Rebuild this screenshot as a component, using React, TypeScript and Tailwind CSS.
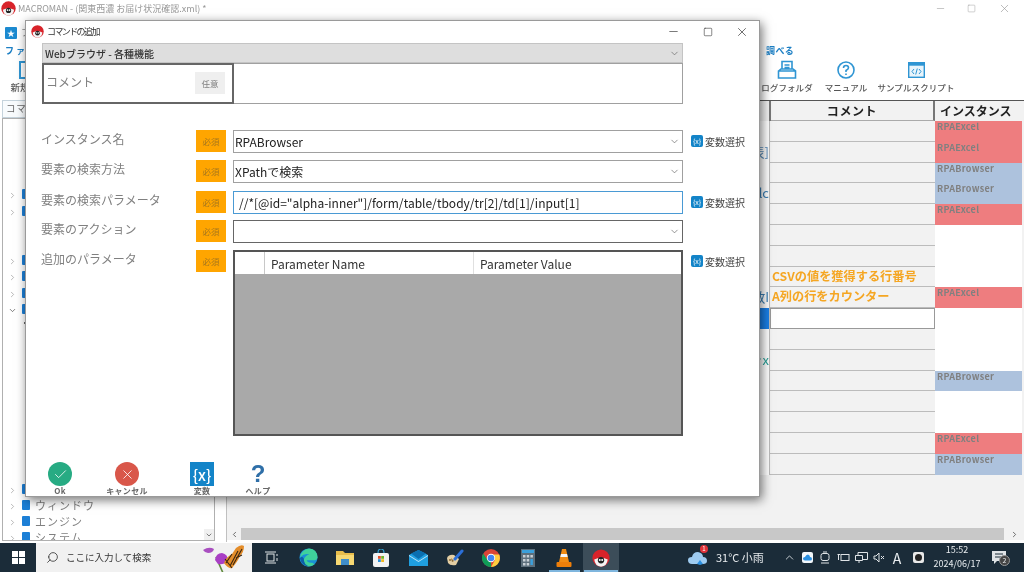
import { Check, ChevronDown, ChevronRight, ChevronLeft, ChevronUp, Minus, Search, Square, X } from "lucide-react";

const font = "font-['Noto_Sans_CJK_JP','Noto_Sans',sans-serif]";

// filas de la grilla de fondo
const rows = [
  { inst: "RPAExcel" },
  { inst: "RPAExcel", peek: "表]", peekColor: "text-[#5b8fbd]" },
  { inst: "RPABrowser" },
  { inst: "RPABrowser", peek: "lc", peekColor: "text-[#3a7fb5]" },
  { inst: "RPAExcel" },
  {},
  {},
  { comment: "CSVの値を獲得する行番号" },
  { inst: "RPAExcel", comment: "A列の行をカウンター", peek: "数I", peekColor: "text-[#3a7fb5]" },
  { selected: true },
  {},
  { peek: "きx", peekColor: "text-[#2aa198]" },
  { inst: "RPABrowser" },
  {},
  {},
  { inst: "RPAExcel" },
  { inst: "RPABrowser" },
] as { inst?: string; comment?: string; peek?: string; peekColor?: string; selected?: boolean }[];

const treeRows: { y: string; open?: boolean; label?: string; leaf?: boolean }[] = [
  { y: "h-[17px]" },
  { y: "h-[49px]" },
  { y: "h-[16px]" },
  { y: "h-[17px]" },
  { y: "h-[16px]" },
  { y: "h-[16px]", open: true },
  { y: "h-[164px]", leaf: true },
  { y: "h-[16px]" },
  { y: "h-[16px]", label: "ウィンドウ" },
  { y: "h-[16px]", label: "エンジン" },
  { y: "h-[16px]", label: "システム" },
];

function AppIcon({ size = 14 }: { size?: number }) {
  return (
    <svg width={size} height={size} viewBox="0 0 24 24">
      <circle cx="12" cy="12" r="11.5" fill="#d8232a" />
      <path d="M3 14 Q12 9 21 14 Q20 23 12 23.5 Q4 23 3 14Z" fill="#f4f4f4" />
      <circle cx="12" cy="15" r="4.2" fill="#222" />
      <circle cx="10.4" cy="14.6" r="1.3" fill="#fff" />
      <circle cx="13.6" cy="14.6" r="1.3" fill="#fff" />
    </svg>
  );
}

function VarIcon({ className = "" }: { className?: string }) {
  return (
    <span className={`flex items-center justify-center bg-[#1384c8] text-white ${className}`}>{"{x}"}</span>
  );
}

function VarSelect() {
  return (
    <div className="flex items-center h-[22px] ml-[8px]">
      <VarIcon className="w-[12px] h-[12px] rounded-[2px] text-[7px] leading-none" />
      <span className="ml-[2px] text-[10px] text-[#444] whitespace-nowrap">変数選択</span>
    </div>
  );
}

function Badge({ text = "必須", on = true }: { text?: string; on?: boolean }) {
  return (
    <div className={`w-[30px] h-[22px] shrink-0 flex items-center justify-center text-[8.5px] ${on ? "bg-[#ffa500] text-[#a8781c]" : "bg-[#efefef] text-[#808080]"}`}>
      {text}
    </div>
  );
}

function FormRow({ label, children, extra }: { label: string; children: React.ReactNode; extra?: boolean }) {
  return (
    <div className="flex items-start h-[23px]">
      <div className="w-[155px] h-[18px] shrink-0 leading-[18px] text-[12px] text-[#808080] whitespace-nowrap">{label}</div>
      <Badge />
      <div className="ml-[7px] w-[450px] shrink-0">{children}</div>
      {extra && <VarSelect />}
    </div>
  );
}

function SelectField({ value, dark }: { value?: string; dark?: boolean }) {
  return (
    <div className={`h-[23px] flex items-center justify-between border pl-[1px] pr-[2px] bg-white ${dark ? "border-[#666] border-[1.5px]" : "border-[#a0a0a0]"}`}>
      <span className="text-[12px] text-[#222] leading-none">{value}</span>
      <ChevronDown size={11} strokeWidth={1.5} className="text-[#666]" />
    </div>
  );
}

function FooterBtn({ icon, label, className }: { icon: React.ReactNode; label: string; className: string }) {
  return (
    <div className={`w-[50px] flex flex-col items-center ${className}`}>
      <div className="h-[24px] flex items-center justify-center">{icon}</div>
      <span className="text-[8px] font-bold text-[#666] leading-[10px] whitespace-nowrap tracking-[0.3px]">{label}</span>
    </div>
  );
}

function Dialog() {
  return (
    <div className="absolute left-[25px] top-[20px] w-[735px] h-[477px] bg-white border border-[#9a9a9a] shadow-[2px_3px_10px_rgba(0,0,0,0.55)] flex flex-col">
      {/* barra de titulo */}
      <div className="h-[21px] shrink-0 flex items-center pl-[5px]">
        <AppIcon size={13} />
        <span className="ml-[3px] text-[9px] tracking-[-1.6px] text-[#333] flex-1">コマンドの追加</span>
        <Minus size={13} strokeWidth={1.2} className="text-[#333]" />
        <Square size={10} strokeWidth={1.4} className="ml-[23px] text-[#333]" />
        <X size={14} strokeWidth={1.2} className="ml-[22px] mr-[10px] text-[#333]" />
      </div>
      <div className="ml-[16px] w-[641px] mt-[1px] h-[20px] shrink-0 flex items-center justify-between bg-[#dedede] border border-[#c4c4c4] pl-[2px] pr-[2px]">
        <span className="text-[10px] font-medium text-[#333]">Webブラウザ - 各種機能</span>
        <ChevronDown size={11} strokeWidth={1.5} className="text-[#666]" />
      </div>
      <div className="ml-[16px] w-[641px] h-[41px] shrink-0 flex">
        <div className="w-[192px] border-2 border-[#666] pl-[2px] flex items-start justify-between pr-[7px]">
          <span className="mt-[7px] text-[12px] text-[#808080] leading-[20px]">コメント</span>
          <div className="mt-[7px]"><Badge text="任意" on={false} /></div>
        </div>
        <div className="flex-1 border border-[#a0a0a0] border-l-0" />
      </div>
      {/* formulario */}
      <div className="mt-[26px] ml-[15px] flex flex-col gap-[7px]">
        <FormRow label="インスタンス名" extra><SelectField value="RPABrowser" /></FormRow>
        <FormRow label="要素の検索方法"><SelectField value="XPathで検索" /></FormRow>
        <div className="mt-[1px] mb-[-1px]">
          <FormRow label="要素の検索パラメータ" extra>
            <div className="h-[23px] flex items-center border border-[#4a9ad4] pl-[5px] text-[12px] text-[#222] whitespace-nowrap bg-white">
              //*[@id="alpha-inner"]/form/table/tbody/tr[2]/td[1]/input[1]
            </div>
          </FormRow>
        </div>
        <FormRow label="要素のアクション"><SelectField dark /></FormRow>
        <FormRow label="追加のパラメータ" extra>
          <div className="h-[186px] border-2 border-[#555] bg-[#a9a9a9] flex flex-col">
            <div className="h-[22px] bg-white flex text-[12px] text-[#333] leading-[24px]">
              <div className="w-[30px] border-r border-[#c8c8c8]" />
              <div className="w-[209px] pl-[6px] border-r border-[#e0e0e0]">Parameter Name</div>
              <div className="pl-[6px]">Parameter Value</div>
            </div>
          </div>
        </FormRow>
      </div>
      {/* botones */}
      <div className="mt-auto flex ml-[9px]">
        <FooterBtn
          className=""
          label="Ok"
          icon={<span className="w-[24px] h-[24px] rounded-full bg-[#27ab83] flex items-center justify-center"><Check size={15} strokeWidth={1.3} className="text-white" /></span>}
        />
        <FooterBtn
          className="ml-[17px]"
          label="キャンセル"
          icon={<span className="w-[24px] h-[24px] rounded-full bg-[#d9574a] flex items-center justify-center"><X size={15} strokeWidth={1.3} className="text-white" /></span>}
        />
        <FooterBtn
          className="ml-[25px]"
          label="変数"
          icon={<VarIcon className="w-[24px] h-[24px] text-[15px] leading-none font-medium" />}
        />
        <FooterBtn
          className="ml-[6px]"
          label="ヘルプ"
          icon={<span className="text-[#2f6fa8] text-[24px] font-bold leading-none font-['Liberation_Sans',sans-serif]">?</span>}
        />
      </div>
    </div>
  );
}

function Grid() {
  return (
    <div className="flex-1 min-h-0 flex flex-col bg-[#f2f2f2] border-t border-[#555]">
      <div className="h-[20px] shrink-0 flex bg-[#f2f2f2]">
        <div className="flex-1 border-r-2 border-[#777]" />
        <div className="w-[164px] border-r-2 border-[#777] border-b border-b-[#aaa] text-center text-[12px] font-bold text-[#222] tracking-[0.6px] leading-[19px]">コメント</div>
        <div className="w-[87px] pl-[5px] text-[12px] font-bold text-[#222] leading-[19px] whitespace-nowrap">インスタンス</div>
        <div className="w-[2px]" />
      </div>
      {rows.map((r, i) => (
        <div key={i} className="h-[20.8px] shrink-0 flex">
          <div className={`flex-1 border-r border-[#bbb] flex justify-end overflow-hidden ${r.selected ? "bg-[#1a7fe6]" : "bg-white"}`}>
            {r.peek && <span className={`text-[13px] leading-[20px] whitespace-nowrap ${r.peekColor}`}>{r.peek}</span>}
          </div>
          <div className={`w-[165px] overflow-hidden pl-[2px] text-[12.2px] font-bold text-[#f5a623] leading-[18px] whitespace-nowrap ${r.selected ? "bg-white border border-[#999]" : "bg-[#f2f2f2] border-b border-[#bcbcbc]"}`}>
            {r.comment}
          </div>
          <div className={`w-[87px] pl-[2px] text-[9px] font-bold text-[#808080] leading-[12px] tracking-[0.3px] ${r.inst === "RPAExcel" ? "bg-[#ee7d7f]" : r.inst === "RPABrowser" ? "bg-[#adc2dd]" : "bg-white"}`}>
            {r.inst}
          </div>
          <div className="w-[2px]" />
        </div>
      ))}
    </div>
  );
}

function TaskCell({ children, active, wide }: { children?: React.ReactNode; active?: boolean; wide?: boolean }) {
  return (
    <div className={`relative h-full flex items-center justify-center shrink-0 ${wide ? "w-[38px]" : "w-[36.6px]"} ${active ? "bg-[#3c4d59]" : ""}`}>
      {children}
    </div>
  );
}

function Butterfly() {
  return (
    <svg width="50" height="30" viewBox="0 0 50 30">
      <path d="M14 14 L21 30" stroke="#5f8a3c" strokeWidth="1.6" fill="none" />
      <path d="M1 7 Q7 3 12 6 Q11 10 6 10 Q3 10 1 7Z" fill="#a94fc0" />
      <path d="M13 17 Q14 10 20 10 Q26 11 26 18 Q22 22 16 21Z" fill="#a93fc4" />
      <path d="M22 20 Q24 14 30 11 L34 5 Q39 1 42 3 Q42 9 38 13 Q36 18 30 25 Q26 26 22 20Z" fill="#e48d2a" />
      <path d="M24 20 L30 11 M28 23 L36 8 M31 22 L40 6 M23 16 L30 25 M34 15 L40 12" stroke="#3a2510" strokeWidth="1.1" fill="none" />
    </svg>
  );
}

function Taskbar() {
  return (
    <div className="h-[30px] shrink-0 flex items-stretch bg-[#1b2c39] border-t border-white text-white">
      <div className="w-[36px] flex items-center justify-center">
        <svg width="13" height="13" viewBox="0 0 13 13" fill="#fff">
          <rect width="6" height="6" /><rect x="7" width="6" height="6" /><rect y="7" width="6" height="6" /><rect x="7" y="7" width="6" height="6" />
        </svg>
      </div>
      <div className="w-[216px] bg-[#f1f1f1] flex items-center pl-[10px] text-[#333] relative overflow-hidden">
        <Search size={13} strokeWidth={1.5} className="-scale-x-100" />
        <span className="ml-[7px] text-[9.5px]">ここに入力して検索</span>
        <div className="absolute right-0 top-0"><Butterfly /></div>
      </div>
      <TaskCell wide>
        <svg width="13" height="13" viewBox="0 0 13 13" fill="none" stroke="#dfe3e6" strokeWidth="1">
          <rect x="2" y="3" width="7" height="7" /><path d="M0 1H11M0 12H11M12 3V5M12 7V10" />
        </svg>
      </TaskCell>
      <TaskCell>
        <svg width="19" height="19" viewBox="0 0 20 20">
          <circle cx="10" cy="10" r="9.5" fill="#1a8fd6" />
          <path d="M1 10 Q3 1 11 .6 Q19 1 19.5 10 Q19 13 15 13 H8 Q9 16 14 15.5 L16.5 17 Q13 19.5 10 19.5 Q4 19 5 12 Q7 7 11 7 Q6 5 1 10Z" fill="#3fd19c" />
          <path d="M5 11 Q5 18 11 19.5 Q3 19 1 11 Q3 8 5 11Z" fill="#0d5ea8" />
        </svg>
      </TaskCell>
      <TaskCell>
        <svg width="18" height="16" viewBox="0 0 18 16">
          <path d="M0 1H7L9 3H18V15H0Z" fill="#e8bd4c" /><rect x="0" y="5" width="18" height="10" fill="#f6d873" /><rect x="5" y="9" width="8" height="6" fill="#3f8dc9" />
        </svg>
      </TaskCell>
      <TaskCell>
        <svg width="18" height="18" viewBox="0 0 18 18">
          <path d="M6 4 Q6 0 9 0 Q12 0 12 4" fill="none" stroke="#35a4d6" strokeWidth="1.2" />
          <rect x="1" y="4" width="16" height="14" rx="2" fill="#f2f2f2" />
          <rect x="6" y="7" width="2.8" height="2.8" fill="#e8502a" /><rect x="9.2" y="7" width="2.8" height="2.8" fill="#70b52c" />
          <rect x="6" y="10.2" width="2.8" height="2.8" fill="#2a8fd8" /><rect x="9.2" y="10.2" width="2.8" height="2.8" fill="#f4b81c" />
        </svg>
      </TaskCell>
      <TaskCell>
        <svg width="19" height="16" viewBox="0 0 19 16">
          <path d="M0 5L9.5 0L19 5V16H0Z" fill="#1f9fe0" /><path d="M0 5L9.5 11L19 5V6L9.5 12L0 6Z" fill="#bfe6fa" /><path d="M2 3.5L9.5 0L17 3.5L9.5 9Z" fill="#0b6fb0" />
        </svg>
      </TaskCell>
      <TaskCell>
        <svg width="18" height="18" viewBox="0 0 18 18">
          <path d="M1 9 Q3 5 8 6 L13 10 L10 16 Q4 17 2 14Z" fill="#e4cfa4" />
          <path d="M5 9 L8 12 L6 13Z" fill="#8a6a38" /><circle cx="4" cy="11" r="1" fill="#8a6a38" />
          <path d="M9 10 L16 2" stroke="#2b6fd8" strokeWidth="3" strokeLinecap="round" />
        </svg>
      </TaskCell>
      <TaskCell>
        <svg width="18" height="18" viewBox="0 0 18 18">
          <circle cx="9" cy="9" r="9" fill="#db4437" />
          <path d="M9 18A9 9 0 0 1 1.2 4.5L5.5 11 Q7 13 9 13Z" fill="#0f9d58" />
          <path d="M9 18A9 9 0 0 0 17.2 5.5H9L13 11Z" fill="#ffcd40" />
          <circle cx="9" cy="9" r="4.2" fill="#fff" /><circle cx="9" cy="9" r="3.3" fill="#4285f4" />
        </svg>
      </TaskCell>
      <TaskCell>
        <svg width="14" height="18" viewBox="0 0 14 18">
          <rect width="14" height="18" fill="#5d6f7c" /><rect x="1" y="1" width="12" height="3" fill="#3ba0dc" />
          <rect x="2" y="6" width="2.5" height="2.5" fill="#c8d0d6" /><rect x="5.7" y="6" width="2.5" height="2.5" fill="#c8d0d6" /><rect x="9.4" y="6" width="2.5" height="2.5" fill="#c8d0d6" />
          <rect x="2" y="10" width="2.5" height="2.5" fill="#c8d0d6" /><rect x="5.7" y="10" width="2.5" height="2.5" fill="#c8d0d6" /><rect x="9.4" y="10" width="2.5" height="6" fill="#3ba0dc" />
          <rect x="2" y="14" width="2.5" height="2.5" fill="#c8d0d6" /><rect x="5.7" y="14" width="2.5" height="2.5" fill="#c8d0d6" />
        </svg>
      </TaskCell>
      <TaskCell>
        <svg width="16" height="18" viewBox="0 0 16 18">
          <path d="M6 0H10L13 13H3Z" fill="#f28c13" /><path d="M5 5H11L11.7 8H4.3Z" fill="#f5f5f5" />
          <rect x="0.5" y="13" width="15" height="5" rx="1" fill="#ee7f0a" />
        </svg>
        <span className="absolute bottom-0 left-[3px] right-[3px] h-[2px] bg-[#7fb6de]" />
      </TaskCell>
      <TaskCell active>
        <AppIcon size={18} />
        <span className="absolute bottom-0 left-[1px] right-[1px] h-[2px] bg-[#7fb6de]" />
      </TaskCell>
      <div className="flex-1" />
      {/* bandeja */}
      <div className="w-[339px] shrink-0 flex items-center text-[#e8ecef]">
        <div className="w-[26px] flex justify-center relative">
          <svg width="20" height="15" viewBox="0 0 20 15"><path d="M4 14 Q0 14 0 10 Q0 7 4 7 Q5 2 10 2 Q15 3 15 7 Q19 7 19 11 Q19 14 15 14Z" fill="#9ecbf0" /><path d="M9 14 L12 10 L15 14 L12 15Z" fill="#2a8fe0" /></svg>
          <span className="absolute top-[-5px] right-[3px] w-[8px] h-[8px] rounded-full bg-[#e2333a] text-[6px] leading-[8px] text-center text-white">1</span>
        </div>
        <span className="w-[60px] pl-[5px] text-[11px] whitespace-nowrap">31°C 小雨</span>
        <div className="ml-[9px] w-[18px] flex justify-center"><ChevronUp size={13} strokeWidth={1.5} /></div>
        <div className="w-[18px] flex justify-center">
          <span className="w-[11px] h-[11px] rounded-[2px] bg-[#f2f7fb] flex items-center justify-center">
            <svg width="9" height="7" viewBox="0 0 9 7"><path d="M2 6.5 Q0 6.5 0 4.5 Q0 3 2 3 Q3 .5 5 .5 Q7 1 7 3 Q9 3 9 5 Q9 6.5 7 6.5Z" fill="#2a8fe0" /></svg>
          </span>
        </div>
        <div className="w-[18px] flex justify-center">
          <svg width="10" height="13" viewBox="0 0 10 13" fill="none" stroke="#dfe3e6"><rect x="1" y="2.5" width="8" height="7" rx="2" /><path d="M1 12H9M3 1H7" /></svg>
        </div>
        <div className="w-[18px] flex justify-center">
          <svg width="13" height="9" viewBox="0 0 13 9" fill="none" stroke="#dfe3e6"><rect x="4" y="1.5" width="8" height="6" /><path d="M.5 1.5H3M1.5 1.5V7" /></svg>
        </div>
        <div className="w-[18px] flex justify-center">
          <svg width="13" height="12" viewBox="0 0 13 12" fill="none" stroke="#dfe3e6"><path d="M3 3V.5H12.5V7.5H8M.5 3.5H7.5V8.5H.5ZM4 8.5V11" /></svg>
        </div>
        <div className="w-[18px] flex justify-center">
          <svg width="12" height="11" viewBox="0 0 12 11" fill="none" stroke="#dfe3e6"><path d="M1 4H3L6 1V10L3 7H1ZM8 4L11 7M11 4L8 7" /></svg>
        </div>
        <span className="w-[18px] text-center text-[14px] leading-none">A</span>
        <div className="ml-[3px] w-[18px] flex justify-center">
          <span className="w-[11px] h-[11px] rounded-[2px] bg-[#e8e8e8] flex items-center justify-center"><span className="w-[7px] h-[7px] rounded-full bg-[#222]" /></span>
        </div>
        <div className="w-[60px] mt-[-2px] flex flex-col items-center text-[9px] leading-[14px]">
          <span>15:52</span>
          <span>2024/06/17</span>
        </div>
        <div className="w-[24px] flex justify-center relative">
          <svg width="14" height="13" viewBox="0 0 14 13"><path d="M0 0H14V10H5L2 13V10H0Z" fill="#dfe3e6" /><path d="M3 3H11M3 6H11" stroke="#1b2c39" /></svg>
          <span className="absolute right-[1px] top-[4px] w-[11px] h-[11px] rounded-full bg-[#444] border border-[#999] text-[7px] leading-[9px] text-center">2</span>
        </div>
        <div className="w-[12px]" />
      </div>
    </div>
  );
}

export default function App() {
  return (
    <div className={`relative w-[1024px] h-[572px] overflow-hidden bg-white flex flex-col blur-[0.45px] ${font}`}>
      {/* cabecera de la ventana de fondo */}
      <div className="h-[17px] shrink-0 flex items-center pl-[1px] text-[#999]">
        <AppIcon size={15} />
        <span className="ml-[2px] text-[9px] flex-1">MACROMAN - (関東西濃 お届け状況確認.xml) *</span>
        <Minus size={11} strokeWidth={1.2} className="mr-[21px]" />
        <Square size={9} strokeWidth={1.2} className="mr-[22px]" />
        <X size={13} strokeWidth={1.2} className="mr-[13px]" />
      </div>
      <div className="h-[26px] shrink-0 flex items-end pb-[4px] pl-[5px]">
        <span className="w-[12px] h-[12px] bg-[#1c8ad0] rounded-[1px] text-white text-[8px] leading-[12px] text-center">★</span>
        <span className="ml-[4px] text-[9px] text-[#888]">フ</span>
      </div>
      <div className="h-[16px] mb-[1px] shrink-0 flex items-center pl-[5px] pr-[230px] justify-between text-[9px] font-bold text-[#1c7fc4] tracking-[0.3px]">
        <span className="tracking-[2px]">ファイル</span>
        <span>調べる</span>
      </div>
      <div className="h-[40px] shrink-0 flex">
        <div className="w-[40px] flex flex-col items-center">
          <span className="mt-[1px] h-[18px] w-[16px] border-2 border-[#2f95d3] ml-[14px]" />
          <span className="mt-[1px] text-[9.5px] font-medium text-[#555]">新規</span>
        </div>
        <div className="flex-1" />
        {[
          { label: "ログフォルダ", w: "w-[60px]", icon: <svg width="20" height="20" viewBox="0 0 20 20" fill="none" stroke="#2f95d3" strokeWidth="1.6"><path d="M5 9V1.5H15V9M7.5 5H12.5M7.5 7.5H12.5M1.5 11L4 9H16L18.5 11V18H1.5ZM1.5 11H18.5" /></svg> },
          { label: "マニュアル", w: "w-[58px]", icon: <svg width="18" height="18" viewBox="0 0 18 18" fill="none" stroke="#2f95d3" strokeWidth="1.6"><circle cx="9" cy="9" r="8" /><path d="M6.5 7 Q6.5 4.5 9 4.5 Q11.5 4.5 11.5 6.8 Q11.5 8 9 9.5 V11 M9 12.6V14" /></svg> },
          { label: "サンプルスクリプト", w: "w-[82px]", icon: <svg width="17" height="16" viewBox="0 0 17 16"><rect x=".7" y=".7" width="15.6" height="14.6" fill="#e8f4fb" stroke="#2f95d3" strokeWidth="1.4" /><rect x=".7" y=".7" width="15.6" height="3" fill="#2f95d3" /><path d="M6 7L4 9.5L6 12M11 7L13 9.5L11 12M9.3 6.5L7.7 12.5" stroke="#2f95d3" fill="none" /></svg> },
        ].map((b) => (
          <div key={b.label} className={`${b.w} flex flex-col items-center`}>
            <div className="h-[20px] flex items-center justify-center">{b.icon}</div>
            <span className="mt-[1px] text-[8.5px] font-medium text-[#555] whitespace-nowrap tracking-[0.1px]">{b.label}</span>
          </div>
        ))}
        <div className="w-[67px]" />
      </div>
      {/* cuerpo */}
      <div className="flex-1 min-h-0 flex overflow-hidden">
        <div className="w-[213px] ml-[2px] mb-[1px] shrink-0 flex flex-col">
          <div className="h-[18px] shrink-0 border border-[#c5d3dc] bg-[#f8fbfd] pl-[3px] text-[9.5px] leading-[15px] text-[#666] tracking-[0.8px]">コマンド</div>
          <div className="flex-1 min-h-0 border border-[#b0b0b0] flex flex-col relative overflow-hidden pt-[69px]">
            {treeRows.map((t, i) => (
              <div key={i} className={`${t.y} shrink-0 flex items-start pl-[5px]`}>
                {t.leaf ? (
                  <span className="mt-[3px] ml-[16px] w-[2px] h-[2px] bg-[#666]" />
                ) : (
                  <>
                    {t.open ? <ChevronDown size={9} strokeWidth={1.8} className="text-[#444] mt-[3px]" /> : <ChevronRight size={9} strokeWidth={1.8} className="text-[#999] mt-[3px]" />}
                    <span className="ml-[5px] mt-[1px] w-[8px] h-[10px] shrink-0 bg-[#1c7fd6] rounded-[1px]" />
                  </>
                )}
                {t.label && <span className="ml-[5px] text-[11px] leading-[12px] text-[#808080] tracking-[1px]">{t.label}</span>}
              </div>
            ))}
            <div className="absolute right-0 bottom-0 w-[10px] h-[11px] bg-[#f0f0f0] flex items-center justify-center">
              <ChevronDown size={8} strokeWidth={2} className="text-[#444]" />
            </div>
          </div>
        </div>
        <div className="w-[11px] shrink-0" />
        <div className="flex-1 min-w-0 flex flex-col border-l border-[#c0c0c0]">
          <Grid />
          <div className="h-[12px] shrink-0 mb-[2px] flex items-center bg-[#f2f2f2]">
            <ChevronLeft size={9} strokeWidth={2} className="ml-[3px] text-[#444] shrink-0" />
            <div className="ml-[2px] flex-1 h-full bg-[#c8c8c8]" />
            <div className="w-[20px] flex justify-center"><ChevronRight size={9} strokeWidth={2} className="text-[#444]" /></div>
          </div>
        </div>
      </div>
      <Taskbar />
      <Dialog />
    </div>
  );
}
